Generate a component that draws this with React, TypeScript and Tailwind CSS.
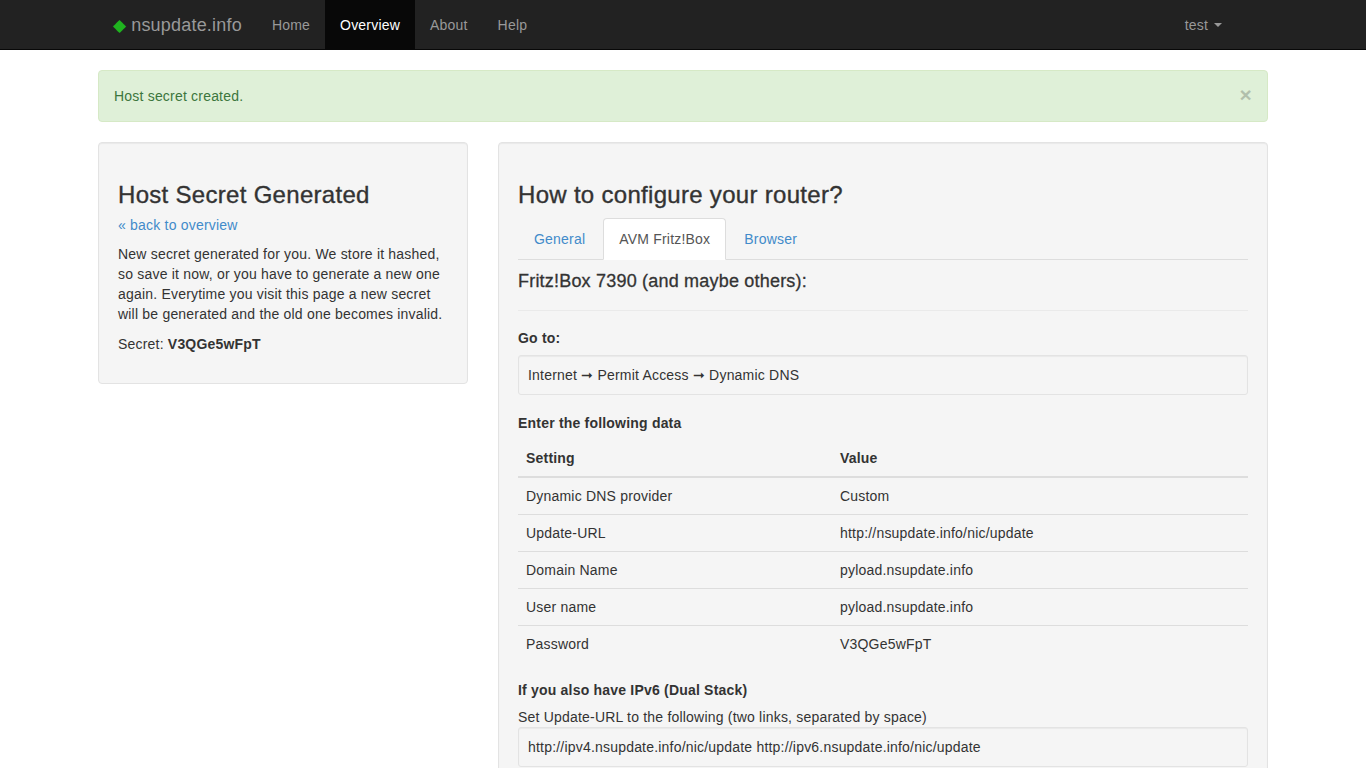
import React from "react";

const rows: [string, string][] = [
  ["Dynamic DNS provider", "Custom"],
  ["Update-URL", "http://nsupdate.info/nic/update"],
  ["Domain Name", "pyload.nsupdate.info"],
  ["User name", "pyload.nsupdate.info"],
  ["Password", "V3QGe5wFpT"],
];

export default function App() {
  return (
    <div
      className="min-h-screen bg-white text-[14px] leading-[20px] tracking-[0.2px] text-[#333]"
      style={{ fontFamily: '"Liberation Sans", Arial, sans-serif' }}
    >
      {/* Navbar */}
      <div className="h-[50px] bg-[#222] border-b border-[#080808]">
        <div className="w-[1170px] mx-auto flex h-[50px]">
          <a className="flex items-center pl-[15px] pr-[15px] text-[18px] text-[#999] h-[50px]">
            <span className="text-[#1fb31f] text-[17px] mr-[5px] leading-none">◆</span>
            nsupdate.info
          </a>
          <a className="flex items-center px-[15px] h-[50px] text-[#999]">Home</a>
          <a className="flex items-center px-[15px] h-[50px] text-white bg-[#080808]">Overview</a>
          <a className="flex items-center px-[15px] h-[50px] text-[#999]">About</a>
          <a className="flex items-center px-[15px] h-[50px] text-[#999]">Help</a>
          <a className="ml-auto mr-[31px] flex items-center px-[15px] h-[50px] text-[#999]">
            test
            <span className="ml-[6px] inline-block w-0 h-0 border-t-[4px] border-t-[#999] border-x-[4px] border-x-transparent" />
          </a>
        </div>
      </div>

      <div className="w-[1170px] mx-auto pt-[20px]">
        {/* Alert */}
        <div className="relative h-[52px] flex items-center px-[15px] bg-[#dff0d8] border border-[#d6e9c6] rounded-[4px] text-[#3c763d]">
          Host secret created.
          <span className="absolute right-[15px] top-[14px] text-[21px] font-bold leading-[20px] text-black opacity-20">
            ×
          </span>
        </div>

        <div className="flex gap-[30px] mt-[20px] items-start">
          {/* Left well */}
          <div className="w-[370px] bg-[#f5f5f5] border border-[#e3e3e3] rounded-[4px] p-[19px] shadow-[inset_0_1px_1px_rgba(0,0,0,0.05)]">
            <h3 className="mt-[20px] mb-[7px] text-[24px] leading-[26.4px] font-medium tracking-[0.3px] [-webkit-text-stroke:0.35px_#333]">
              Host Secret Generated
            </h3>
            <p className="mb-[9px]">
              <a className="text-[#428bca]">« back to overview</a>
            </p>
            <p className="mb-[10px]">
              New secret generated for you. We store it hashed, so save it now, or you have to generate a new one
              again. Everytime you visit this page a new secret will be generated and the old one becomes invalid.
            </p>
            <p className="mb-[10px]">
              Secret: <b>V3QGe5wFpT</b>
            </p>
          </div>

          {/* Right well */}
          <div className="w-[770px] bg-[#f5f5f5] border border-[#e3e3e3] rounded-[4px] p-[19px] shadow-[inset_0_1px_1px_rgba(0,0,0,0.05)]">
            <h3 className="mt-[20px] mb-[10px] text-[24px] leading-[26.4px] font-medium tracking-[0.3px] [-webkit-text-stroke:0.35px_#333]">
              How to configure your router?
            </h3>
            <div className="flex border-b border-[#ddd]">
              <a className="mr-[2px] px-[15px] py-[10px] text-[#428bca] border border-transparent rounded-t-[4px] -mb-px">
                General
              </a>
              <a className="mr-[2px] px-[15px] py-[10px] text-[#555] bg-white border border-[#ddd] border-b-white rounded-t-[4px] -mb-px">
                AVM Fritz!Box
              </a>
              <a className="mr-[2px] px-[15px] py-[10px] text-[#428bca] border border-transparent rounded-t-[4px] -mb-px">
                Browser
              </a>
            </div>
            <h4 className="mt-[12px] mb-[10px] text-[18px] leading-[19.8px] font-medium [-webkit-text-stroke:0.3px_#333]">
              Fritz!Box 7390 (and maybe others):
            </h4>
            <hr className="mt-[18px] mb-[17px] border-0 border-t border-[#eaeaea]" />
            <div className="font-bold mb-[7px]">Go to:</div>
            <div className="bg-[#f5f5f5] border border-[#e3e3e3] rounded-[3px] p-[9px] mb-[18px] shadow-[inset_0_1px_1px_rgba(0,0,0,0.05)]">
              Internet ➞ Permit Access ➞ Dynamic DNS
            </div>
            <div className="font-bold mb-[7px]">Enter the following data</div>
            <table className="w-full mb-[18px] border-collapse">
              <thead>
                <tr>
                  <th className="text-left font-bold p-[8px] border-b-2 border-[#ddd] w-[314px]">Setting</th>
                  <th className="text-left font-bold p-[8px] border-b-2 border-[#ddd]">Value</th>
                </tr>
              </thead>
              <tbody>
                {rows.map(([k, v], i) => (
                  <tr key={k}>
                    <td className={"p-[8px] " + (i > 0 ? "border-t border-[#ddd]" : "")}>{k}</td>
                    <td className={"p-[8px] " + (i > 0 ? "border-t border-[#ddd]" : "")}>{v}</td>
                  </tr>
                ))}
              </tbody>
            </table>
            <div className="font-bold mb-[7px]">If you also have IPv6 (Dual Stack)</div>
            <div>Set Update-URL to the following (two links, separated by space)</div>
            <div className="bg-[#f5f5f5] border border-[#e3e3e3] rounded-[3px] p-[9px] mb-[20px] shadow-[inset_0_1px_1px_rgba(0,0,0,0.05)]">
              http://ipv4.nsupdate.info/nic/update http://ipv6.nsupdate.info/nic/update
            </div>
            <div className="h-[200px]" />
          </div>
        </div>
      </div>
    </div>
  );
}
